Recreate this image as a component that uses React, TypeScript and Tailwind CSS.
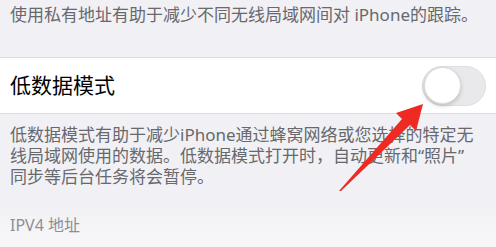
const font = "font-['Noto_Sans','Noto_Sans_CJK_SC',sans-serif]";

function Toggle() {
  return (
    <div className="flex h-[40px] w-[64px] items-center rounded-full border border-[#dedee2] bg-[#e9e9ec] p-[1px]">
      <div className="h-[37px] w-[37px] rounded-full border border-[#d9d9dd] bg-white shadow-[0_2px_4px_rgba(0,0,0,0.18)]" />
    </div>
  );
}

function Arrow() {
  return (
    <svg className="pointer-events-none absolute left-0 top-0" width="496" height="247" viewBox="0 0 496 247">
      <polygon
        points="423,104 396,113 402,119 339,191 341,191 410,125 416,131"
        fill="#ee2a22"
      />
    </svg>
  );
}

export default function App() {
  return (
    <div className={`relative h-[247px] w-[496px] overflow-hidden bg-[#f1f1f5] ${font}`}>
      <p className="px-[10px] pt-[4px] text-[17px] leading-[22px] text-[#68686d] whitespace-nowrap">
        使用私有地址有助于减少不同无线局域网间对 iPhone的跟踪。
      </p>

      <div className="mt-[31px] flex h-[57px] items-center justify-between border-y border-[#dcdce0] bg-white pl-[10px] pr-[10px]">
        <span className="text-[21px] leading-none text-black">低数据模式</span>
        <Toggle />
      </div>

      <div className="mt-[10px] flex flex-col px-[10px] text-[17px] leading-[21px] text-[#68686d] whitespace-nowrap">
        <span>低数据模式有助于减少iPhone通过蜂窝网络或您选择的特定无</span>
        <span>线局域网使用的数据。低数据模式打开时，自动更新和“照片”</span>
        <span>同步等后台任务将会暂停。</span>
      </div>

      <div className="mt-[14px] h-[51px] bg-gradient-to-b from-[#f1f1f5] to-[#f8f8fa] px-[10px] pt-[12px]">
        <span className="text-[16px] leading-[20px] text-[#8e8e93]">IPV4 地址</span>
      </div>
      <div className="h-[10px] bg-white" />

      <Arrow />
    </div>
  );
}
